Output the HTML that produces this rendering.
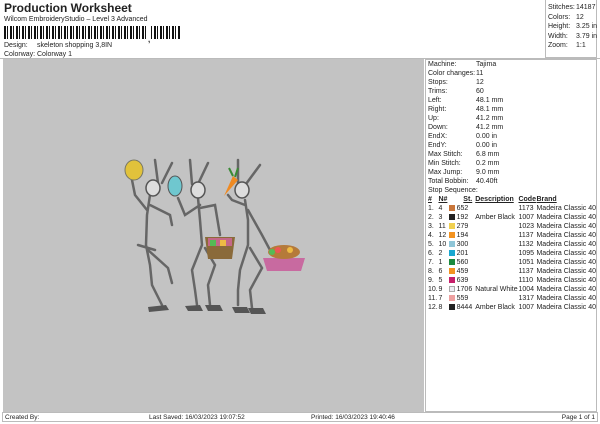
<!DOCTYPE html>
<html><head><meta charset="utf-8"><style>
*{margin:0;padding:0;box-sizing:border-box}
body{width:600px;height:424px;background:#fff;font-family:"Liberation Sans",sans-serif;color:#222;position:relative;overflow:hidden}
.a{position:absolute;white-space:nowrap}
.s{font-size:7px}
.grey{position:absolute;left:3px;top:59px;width:421px;height:353px;background:#c3c3c3}
.panel{position:absolute;left:425px;top:59px;width:172px;height:353px;border:1px solid #bbb}
.bot{position:absolute;left:2px;top:412px;width:596px;height:10px;border:1px solid #bbb;font-size:6.5px}
.hdr{position:absolute;left:545px;top:0;width:52px;height:58px;border:1px solid #bbb;border-top:none}
.top{position:absolute;left:0;top:58px;width:600px;border-top:1px solid #bbb}
table{border-collapse:collapse}
td{font-size:7px;padding:0;height:9px;line-height:9px;white-space:nowrap}
.sw{display:inline-block;width:6px;height:6px;vertical-align:-1px}
</style></head><body>
<div class="a" style="left:4px;top:1px;font-size:12px;font-weight:bold">Production Worksheet</div>
<div class="a s" style="left:4px;top:16px">Wilcom EmbroideryStudio – Level 3 Advanced</div>
<div class="a" style="left:4px;top:26px;width:176px;height:13px;background:repeating-linear-gradient(90deg,#111 0 2px,#fff 2px 3px,#111 3px 4px,#fff 4px 6px)"></div>
<div class="a" style="left:147px;top:26px;width:4px;height:14px;background:#fff"></div>
<div class="a" style="left:148px;top:36px;font-size:8px;font-weight:bold;line-height:8px">,</div>
<div class="a s" style="left:4px;top:42px">Design:</div><div class="a s" style="left:37px;top:42px">skeleton shopping 3,8IN</div>
<div class="a s" style="left:4px;top:51px">Colorway:</div><div class="a s" style="left:37px;top:51px">Colorway 1</div>
<div class="hdr"></div>
<div class="a s" style="left:548px;top:3px;line-height:9.5px">Stitches:<br>Colors:<br>Height:<br>Width:<br>Zoom:</div>
<div class="a s" style="left:576px;top:3px;line-height:9.5px">14187<br>12<br>3.25 in<br>3.79 in<br>1:1</div>
<div class="top"></div>
<div class="grey">
<svg width="421" height="353" viewBox="3 59 421 353" style="position:absolute;left:0;top:0">
<g stroke="#666" stroke-width="2.5" fill="none" stroke-linecap="round">
<path d="M150 195 L147 215 L146 245 M147 210 L135 195 L132 180 M150 205 L170 215 L172 225 M146 245 L150 265 L152 285 L162 305 M148 250 L168 268 L172 283 M138 245 L155 250"/>
<path d="M158 183 L155 160 M162 183 L172 163"/>
<path d="M198 198 L200 220 L202 245 M200 205 L185 215 L178 198 M200 208 L215 205 L220 235 M202 245 L192 270 L195 290 L197 305 M205 248 L215 265 L208 285 L210 305"/>
<path d="M192 184 L190 160 M198 184 L208 163"/>
<path d="M245 200 L248 220 L248 245 M245 205 L232 200 L228 195 M248 210 L262 235 L270 250 M248 245 L240 270 L238 290 L238 305 M250 248 L262 268 L250 290 L252 308"/>
<path d="M238 183 L238 160 M246 184 L260 165"/>
</g>
<g fill="#ddd" stroke="#555" stroke-width="1.5">
<ellipse cx="153" cy="188" rx="7" ry="8"/><ellipse cx="198" cy="190" rx="7" ry="8"/><ellipse cx="242" cy="190" rx="7" ry="8"/>
</g>
<g fill="#555"><path d="M148 307 l18 -2 3 5 -20 2z M185 306 l15 -1 3 6 -15 0z M205 305 l15 0 3 6 -15 0z M232 307 l15 0 3 6 -15 0z M248 308 l15 0 3 6 -15 0z"/></g>
<ellipse cx="134" cy="170" rx="9" ry="10" fill="#e1c23b" stroke="#776" stroke-width="1"/>
<ellipse cx="175" cy="186" rx="7" ry="10" fill="#6fc7cf" stroke="#555" stroke-width="1"/>
<path d="M224 196 L233 176 L238 180 Z" fill="#ef8a22"/><path d="M233 176 l-4 -8 M235 177 l3 -9" stroke="#3a8a35" stroke-width="2"/>
<path d="M205 237 h30 l-3 22 h-24z" fill="#8a6a3a"/><rect x="208" y="238" width="24" height="8" fill="#d6a" opacity=".7"/><rect x="210" y="240" width="6" height="6" fill="#5b5"/><rect x="220" y="240" width="6" height="6" fill="#eb4"/>
<path d="M263 258 h42 l-4 13 h-34z" fill="#c86aa0"/><ellipse cx="284" cy="252" rx="16" ry="7" fill="#b57a3a"/><circle cx="278" cy="250" r="3" fill="#e55"/><circle cx="290" cy="250" r="3" fill="#eb4"/><circle cx="272" cy="252" r="3" fill="#5b5"/>
</svg>
</div>
<div class="panel">
<div class="a s" style="left:2px;top:0;line-height:9px">Machine:<br>Color changes:<br>Stops:<br>Trims:<br>Left:<br>Right:<br>Up:<br>Down:<br>EndX:<br>EndY:<br>Max Stitch:<br>Min Stitch:<br>Max Jump:<br>Total Bobbin:<br>Stop Sequence:</div>
<div class="a s" style="left:50px;top:0;line-height:9px">Tajima<br>11<br>12<br>60<br>48.1 mm<br>48.1 mm<br>41.2 mm<br>41.2 mm<br>0.00 in<br>0.00 in<br>6.8 mm<br>0.2 mm<br>9.0 mm<br>40.40ft</div>
<table class="a" style="left:2px;top:135px">
<tr style="font-weight:bold;text-decoration:underline"><td style="width:12px">#</td><td style="width:13px">N#</td><td style="width:23px;text-align:right">St.</td><td style="width:48px;padding-left:3px">Description</td><td style="width:19px">Code</td><td>Brand</td></tr>
<tr><td>1.</td><td>4</td><td><span class="sw" style="background:#c9763a"></span> 652</td><td></td><td>1173</td><td>Madeira Classic 40</td></tr>
<tr><td>2.</td><td>3</td><td><span class="sw" style="background:#222"></span> 192</td><td style="padding-left:3px">Amber Black</td><td>1007</td><td>Madeira Classic 40</td></tr>
<tr><td>3.</td><td>11</td><td><span class="sw" style="background:#f0d050"></span> 279</td><td></td><td>1023</td><td>Madeira Classic 40</td></tr>
<tr><td>4.</td><td>12</td><td><span class="sw" style="background:#f39320"></span> 194</td><td></td><td>1137</td><td>Madeira Classic 40</td></tr>
<tr><td>5.</td><td>10</td><td><span class="sw" style="background:#8fc6d8"></span> 300</td><td></td><td>1132</td><td>Madeira Classic 40</td></tr>
<tr><td>6.</td><td>2</td><td><span class="sw" style="background:#1aa7d0"></span> 201</td><td></td><td>1095</td><td>Madeira Classic 40</td></tr>
<tr><td>7.</td><td>1</td><td><span class="sw" style="background:#1b8a3e"></span> 560</td><td></td><td>1051</td><td>Madeira Classic 40</td></tr>
<tr><td>8.</td><td>6</td><td><span class="sw" style="background:#f39320"></span> 459</td><td></td><td>1137</td><td>Madeira Classic 40</td></tr>
<tr><td>9.</td><td>5</td><td><span class="sw" style="background:#c61e6a"></span> 639</td><td></td><td>1110</td><td>Madeira Classic 40</td></tr>
<tr><td>10.</td><td>9</td><td><span class="sw" style="background:#eeeef4;border:1px solid #aaa"></span> 1706</td><td style="padding-left:3px">Natural White</td><td>1004</td><td>Madeira Classic 40</td></tr>
<tr><td>11.</td><td>7</td><td><span class="sw" style="background:#eea0a0"></span> 559</td><td></td><td>1317</td><td>Madeira Classic 40</td></tr>
<tr><td>12.</td><td>8</td><td><span class="sw" style="background:#222"></span> 8444</td><td style="padding-left:3px">Amber Black</td><td>1007</td><td>Madeira Classic 40</td></tr>
</table>
</div>
<div class="bot">
<span class="a" style="left:2px;top:1px">Created By:</span>
<span class="a" style="left:146px;top:1px">Last Saved: 16/03/2023 19:07:52</span>
<span class="a" style="left:308px;top:1px">Printed: 16/03/2023 19:40:46</span>
<span class="a" style="right:2px;top:1px">Page 1 of 1</span>
</div>
</body></html>
